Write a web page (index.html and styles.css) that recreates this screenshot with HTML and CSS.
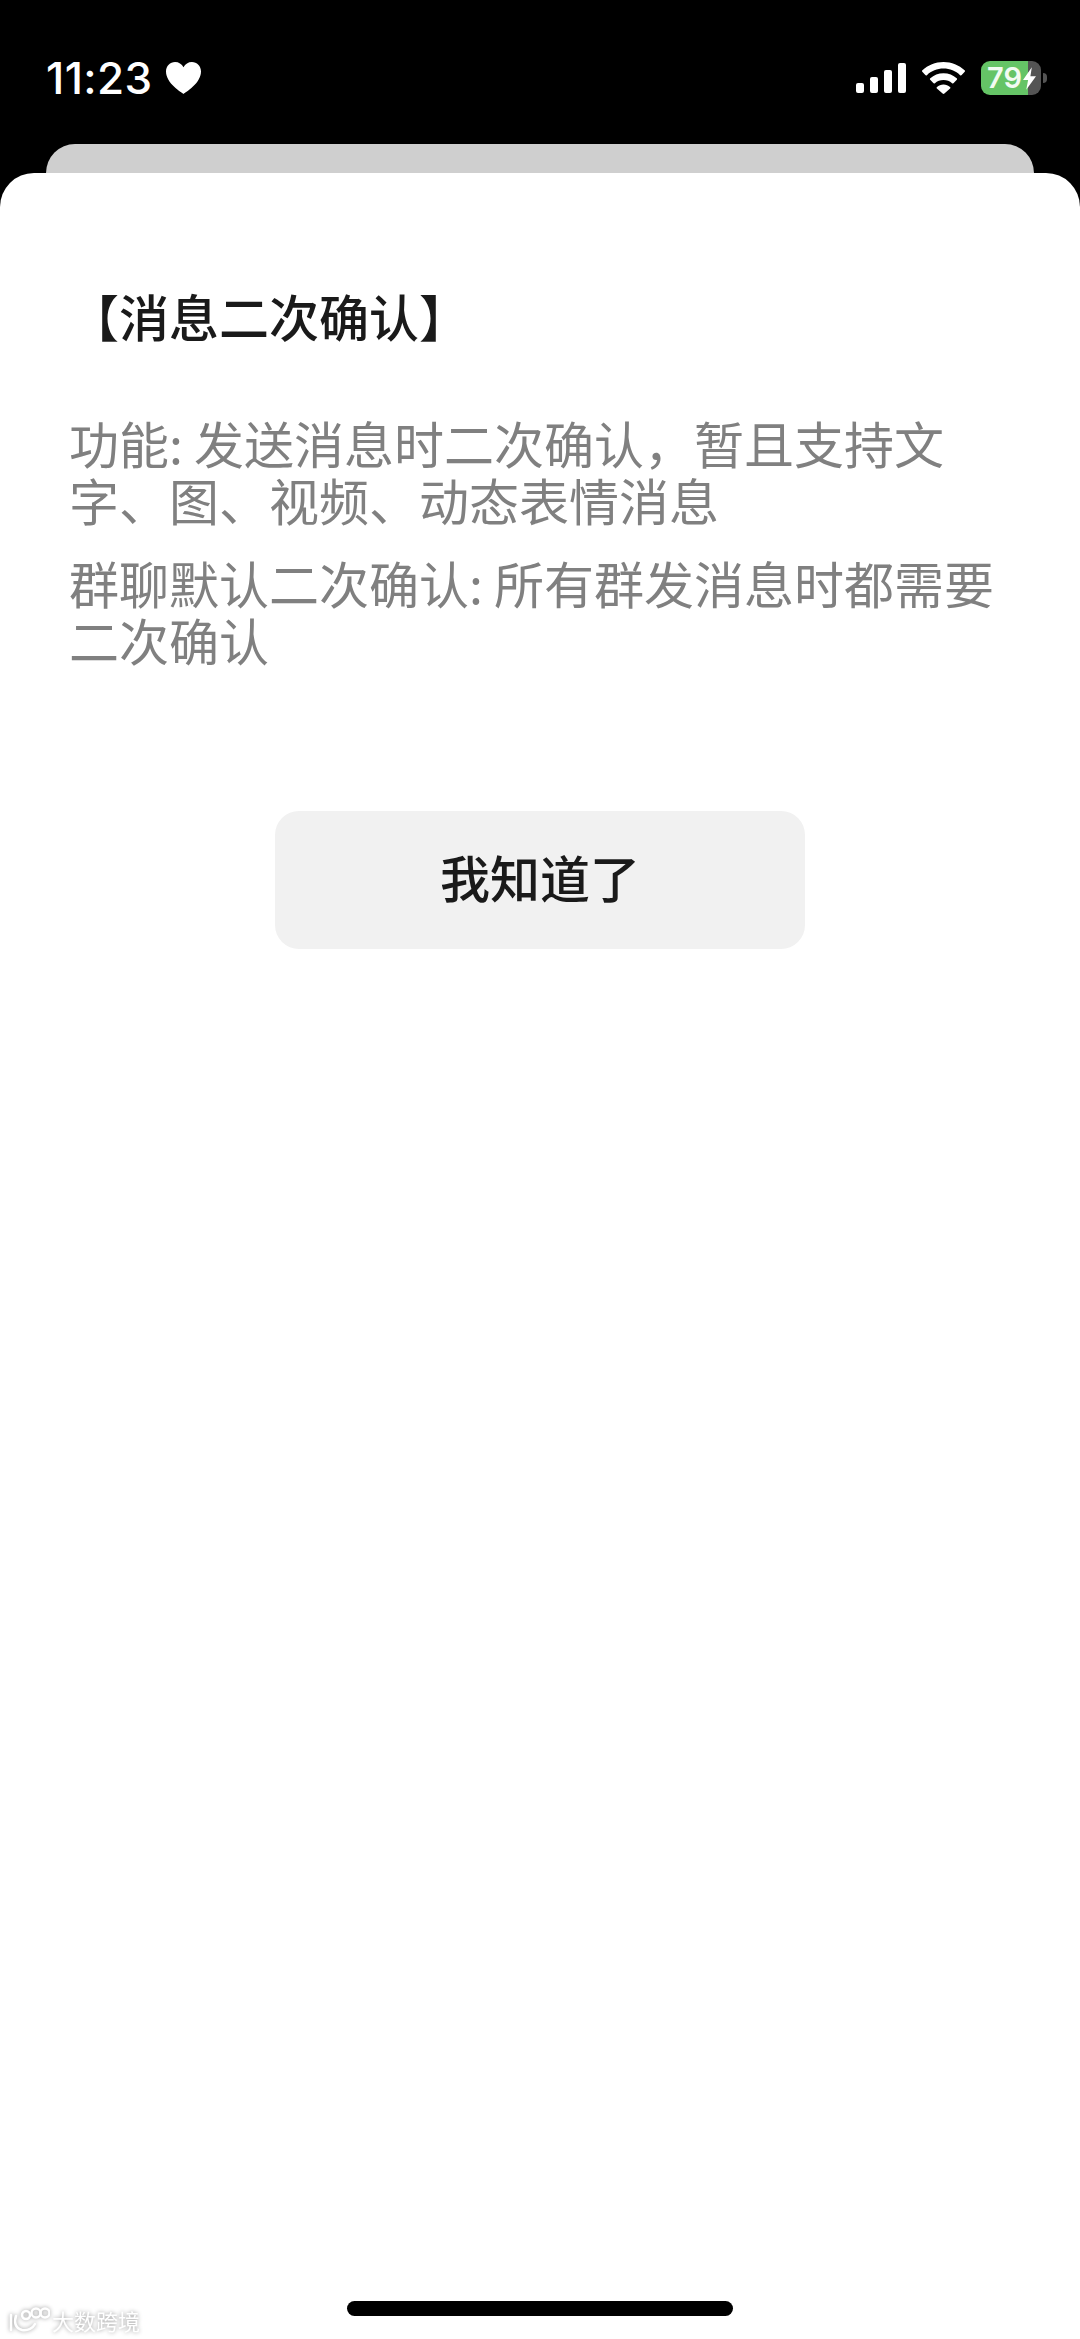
FILE: index.html
```html
<!DOCTYPE html>
<html lang="zh-CN">
<head>
    <meta charset="UTF-8">
    <meta name="viewport" content="width=device-width, initial-scale=1.0">
    <title>消息二次确认</title>
    <link rel="stylesheet" href="styles.css">
</head>
<body>
    <header class="status-bar">
        <div class="status-left">
            <span class="time">11:23</span>
            <svg class="heart" viewBox="0 0 35 32" aria-hidden="true">
                <path d="M17.5 32C15.6 30.6 0 21.4 0 9.6 0 3.9 4.1 0 9.1 0c3.6 0 6.7 2 8.4 5.2C19.2 2 22.3 0 25.9 0 30.9 0 35 3.9 35 9.6 35 21.4 19.4 30.6 17.5 32Z"/>
            </svg>
        </div>
        <div class="status-right">
            <div class="signal">
                <span class="signal-bar bar-1"></span>
                <span class="signal-bar bar-2"></span>
                <span class="signal-bar bar-3"></span>
                <span class="signal-bar bar-4"></span>
            </div>
            <svg class="wifi" viewBox="0 0 43 32" aria-hidden="true">
                <path d="M21.5 0C13.3 0 6 3.1.4 8.3c-.5.4-.5 1-.1 1.5l3 3.3c.4.5 1.1.5 1.6.1C9.300 9 15.100 6.600 21.500 6.600S33.700 9 38.100 13.200c.5.4 1.200.4 1.600-.1l3-3.300c.4-.5.4-1.100-.1-1.500C37 3.100 29.700 0 21.500 0Z"/>
                <path d="M21.500 11.200c-5.100 0-9.700 1.900-13.200 5.100-.5.4-.5 1.100-.1 1.500l3.100 3.300c.4.500 1.100.500 1.600.1 2.300-2 5.300-3.200 8.600-3.200s6.300 1.200 8.600 3.200c.5.400 1.200.400 1.600-.1l3.100-3.300c.4-.4.4-1.100-.1-1.500-3.500-3.200-8.100-5.100-13.200-5.100Z"/>
                <path d="M21.500 22.400c-2.500 0-4.800.9-6.500 2.500-.5.4-.5 1.100-.1 1.500l5.700 5.200c.5.500 1.300.500 1.800 0l5.700-5.200c.4-.4.4-1.100-.1-1.500-1.700-1.600-4-2.500-6.500-2.500Z"/>
            </svg>
            <div class="battery">
                <div class="battery-body">
                    <span class="battery-level">79</span>
                    <svg class="bolt" viewBox="0 0 14 24" aria-hidden="true">
                        <path d="M9.500 0 0 13.500h5.500L3.500 24 14 9.500H8Z"/>
                    </svg>
                </div>
                <span class="battery-nub"></span>
            </div>
        </div>
    </header>

    <div class="peek-card"></div>

    <main class="sheet">
        <h2 class="sheet-title">【消息二次确认】</h2>
        <div class="sheet-desc">
            <p>功能: 发送消息时二次确认，暂且支持文字、图、视频、动态表情消息</p>
            <p>群聊默认二次确认: 所有群发消息时都需要二次确认</p>
        </div>
        <button class="ok-button">我知道了</button>
        <div class="home-bar"></div>
    </main>

    <div class="watermark">
        <svg class="watermark-logo" viewBox="0 0 42 26" aria-hidden="true">
            <path d="M3 8v15M8 9c-2 6-1 12 6 14 6 1 11-2 13-6" />
            <circle cx="18" cy="8" r="4"/>
            <circle cx="28" cy="6" r="4.500"/>
            <circle cx="37" cy="6" r="4.500"/>
        </svg>
        <span class="watermark-text">大数跨境</span>
    </div>
</body>
</html>
```

FILE: styles.css
```css
* {
    margin: 0;
    padding: 0;
    box-sizing: border-box;
}
html,
body {
    height: 2339px;
    overflow: hidden;
}
body {
    font-family: "Noto Sans CJK SC", "Noto Sans", sans-serif;
    background-color: #000;
    display: flex;
    flex-direction: column;
    position: relative;
}

/* status bar */
.status-bar {
    height: 144px;
    flex-shrink: 0;
    display: flex;
    justify-content: space-between;
    align-items: flex-start;
    padding: 61px 33px 0 46px;
    color: white;
}
.status-left {
    display: flex;
    align-items: center;
    gap: 13px;
    height: 34px;
}
.time {
    font-family: Inter, sans-serif;
    font-size: 44px;
    font-weight: 500;
    line-height: 34px;
    letter-spacing: 0.4px;
}
.heart {
    width: 35px;
    height: 32px;
    fill: white;
}
.status-right {
    display: flex;
    align-items: flex-start;
}
.signal {
    display: flex;
    align-items: flex-end;
    gap: 6px;
    height: 30px;
    margin-top: 2px;
    margin-right: 16px;
}
.signal-bar {
    width: 8px;
    background-color: white;
    border-radius: 2px;
}
.bar-1 { height: 10px; }
.bar-2 { height: 16px; }
.bar-3 { height: 23px; }
.bar-4 { height: 30px; }
.wifi {
    width: 43px;
    height: 32px;
    fill: white;
    margin-top: 1px;
    margin-right: 16px;
}
.battery {
    display: flex;
    align-items: center;
    gap: 2px;
}
.battery-body {
    width: 60px;
    height: 34px;
    border-radius: 9px;
    background: linear-gradient(to right, #65c466 47px, #545454 47px);
    display: flex;
    align-items: center;
    padding-left: 6px;
    gap: 1px;
}
.battery-level {
    font-family: Inter, sans-serif;
    font-size: 29px;
    font-weight: 600;
    line-height: 34px;
    color: #f2fbf2;
}
.bolt {
    width: 13px;
    height: 23px;
    fill: white;
}
.battery-nub {
    width: 4px;
    height: 10px;
    background-color: #545454;
    border-radius: 0 4px 4px 0;
}

/* card behind the sheet */
.peek-card {
    height: 29px;
    flex-shrink: 0;
    margin: 0 46px;
    background-color: #cfcfcf;
    border-radius: 30px 30px 0 0;
}

/* sheet */
.sheet {
    flex: 1;
    background-color: white;
    border-radius: 34px 34px 0 0;
    padding: 113px 69px 0;
    display: flex;
    flex-direction: column;
    align-items: center;
}
.sheet-title {
    width: 100%;
    font-size: 50px;
    font-weight: 500;
    line-height: 58px;
    color: #1a1a1a;
}
.sheet-desc {
    width: 100%;
    margin-top: 70px;
    display: flex;
    flex-direction: column;
    gap: 26px;
    font-size: 50px;
    line-height: 57px;
    color: #808080;
}
.ok-button {
    width: 530px;
    height: 138px;
    margin-top: 143px;
    padding-bottom: 8px;
    border: none;
    border-radius: 24px;
    background-color: #f1f1f1;
    color: #1a1a1a;
    font-family: inherit;
    font-size: 50px;
    font-weight: 500;
}
.home-bar {
    width: 386px;
    height: 15px;
    margin-top: auto;
    margin-bottom: 23px;
    background-color: black;
    border-radius: 8px;
}

/* watermark over the corner */
.watermark {
    position: absolute;
    left: 8px;
    bottom: 6px;
    display: flex;
    align-items: center;
    gap: 2px;
    filter: drop-shadow(0 0 2px #9a9a9a);
}
.watermark-logo {
    width: 42px;
    height: 26px;
    fill: none;
    stroke: white;
    stroke-width: 2.500;
    stroke-linecap: round;
}
.watermark-text {
    font-size: 22px;
    line-height: 26px;
    color: white;
}
```
